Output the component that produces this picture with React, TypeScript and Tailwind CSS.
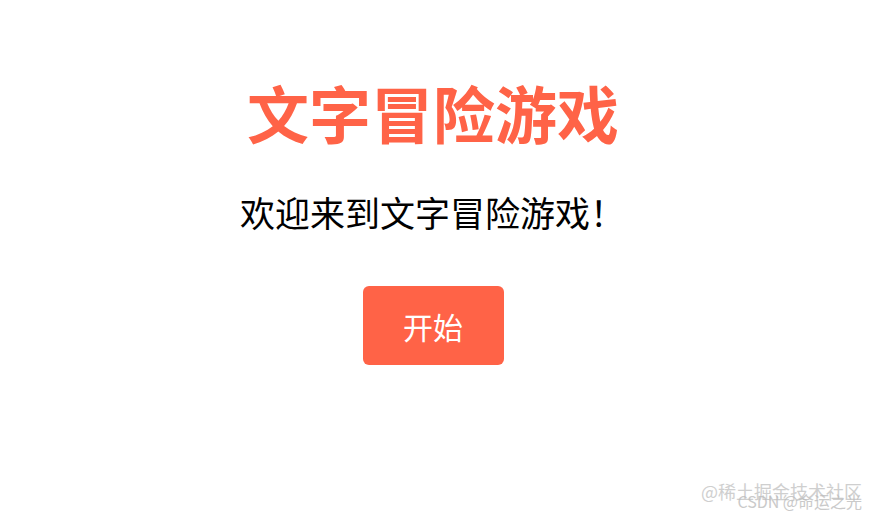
export default function App() {
  return (
    <div
      className="relative w-[880px] h-[519px] bg-white overflow-hidden"
      style={{ fontFamily: '"Noto Sans CJK SC", "Noto Sans", sans-serif' }}
    >
      <div className="flex flex-col items-center pt-[75px] pr-[14px]">
        <h1 className="text-[62px] leading-[74px] font-bold text-[#ff6347]">文字冒险游戏</h1>
        <p className="mt-[43px] mr-[1px] text-[35px] leading-[40px] text-black">欢迎来到文字冒险游戏！</p>
        <button className="mt-[54px] w-[141px] h-[79px] rounded-md bg-[#ff6347] text-white text-[30px] leading-none">
          开始
        </button>
      </div>

      {/* watermarks */}
      <div className="absolute right-[18px] bottom-[19px] text-[18px] leading-none text-[#c4c4c4] opacity-80">
        @稀土掘金技术社区
      </div>
      <div className="absolute right-[18px] bottom-[10px] text-[16px] leading-none text-[#bdbdbd] opacity-80">
        CSDN @命运之光
      </div>
    </div>
  );
}
